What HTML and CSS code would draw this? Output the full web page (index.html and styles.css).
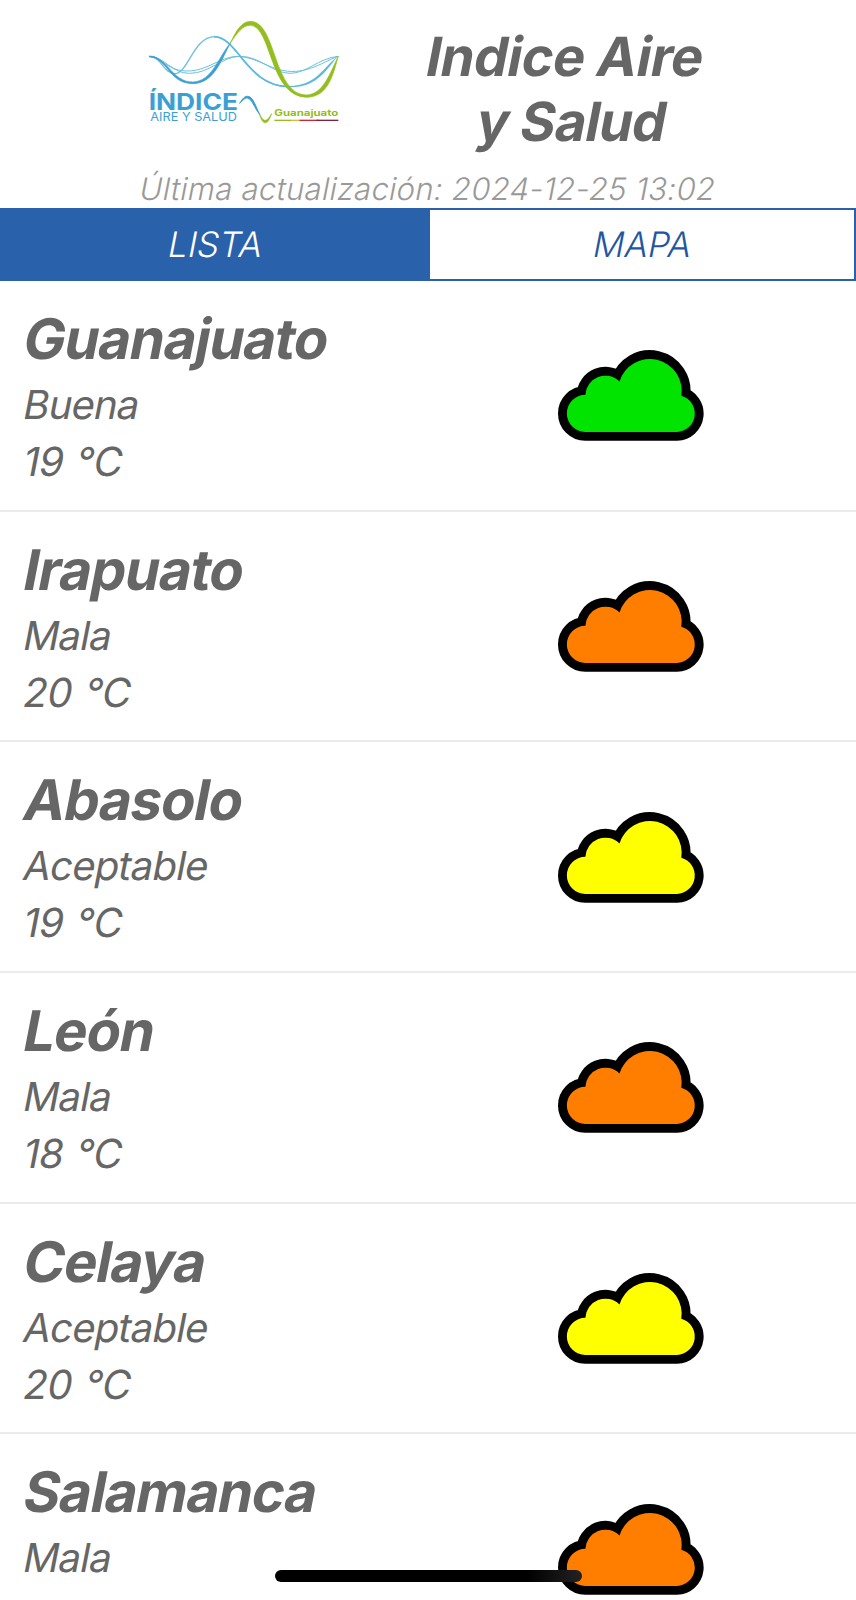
FILE: index.html
```html
<!DOCTYPE html>
<html lang="es">
<head>
    <meta charset="UTF-8">
    <meta name="viewport" content="width=device-width, initial-scale=1.0">
    <title>Indice Aire y Salud</title>
    <link rel="stylesheet" href="styles.css">
</head>
<body>

<!-- Cloud shape shared by all the rows -->
<svg class="defs" width="0" height="0">
    <symbol id="cloud" viewBox="54 57 437 275">
        <path d="M136 305A55.5 55.5 0 0 1 136 194A60 60 0 0 1 238 154A95.2 95.2 0 0 1 423 197A55 55 0 0 1 410 305Z" stroke="#000" stroke-width="53" paint-order="stroke"/>
    </symbol>
</svg>

<div class="app">
    <header class="header">
        <svg class="logo" viewBox="0 0 690 390" fill="none">
            <g stroke="#6cc0dd" stroke-width="3">
                <path d="M58 139C105 141 125 190 178 190C240 190 275 140 330 139C390 138 425 189 480 190C530 190 565 145 624 139"/>
                <path d="M58 139C95 142 110 180 165 183C220 186 255 153 300 142C350 129 400 165 445 178C520 200 570 160 624 139"/>
            </g>
            <path d="M70 140C95 150 105 192 135 191C175 189 190 80 254 80" stroke="#6cc0dd" stroke-width="4"/>
            <path d="M252 78C325 78 350 228 478 228C560 228 580 170 624 139C590 176 565 233 478 232C345 229 325 84 252 82Z" fill="#5db9de"/>
            <path d="M252 80C325 80 350 230 478 230" stroke="#5db9de" stroke-width="5"/>
            <path d="M58 138C110 138 125 216 188 216C248 214 265 140 302 98C275 145 255 220 188 221C115 220 115 145 58 141Z" fill="#3c9fd4" stroke="#3c9fd4" stroke-width="2"/>
            <path d="M301 99C320 60 335 34 363 34C440 38 430 254 529 255C580 253 600 190 625 138C609 195 595 261 529 262C418 258 425 50 362 46C338 44 320 72 301 99Z" fill="#94bd20" stroke="#94bd20" stroke-width="2"/>
            <text class="logo-name" x="56" y="300" textLength="268" lengthAdjust="spacingAndGlyphs">ÍNDICE</text>
            <text class="logo-sub" x="61" y="333" textLength="260" lengthAdjust="spacingAndGlyphs">AIRE Y SALUD</text>
            <path d="M329 280C339 264 345 258 353 259C370 260 376 288 389 313C373 294 366 266 352 264C344 263 338 272 329 280Z" fill="#3c9fd4" stroke="#3c9fd4" stroke-width="3"/>
            <path d="M387 309C394 323 399 331 406 331C413 330 418 322 425 311C419 328 413 338 405 338C396 337 392 323 387 309Z" fill="#94bd20" stroke="#94bd20" stroke-width="2"/>
            <text class="logo-state" x="433" y="319" textLength="192" lengthAdjust="spacingAndGlyphs">Guanajuato</text>
            <path d="M433 331H483" stroke="#94bd20" stroke-width="4"/>
            <path d="M483 331H508" stroke="#e0b93c" stroke-width="4"/>
            <path d="M508 331H565" stroke="#c9283b" stroke-width="4"/>
            <path d="M560 331H625" stroke="#7d2340" stroke-width="4"/>
        </svg>
        <h1><span class="slant">Indice Aire</span> <span class="slant second">y Salud</span></h1>
    </header>
    <p class="updated slant">Última actualización: 2024-12-25 13:02</p>

    <nav class="tabs">
        <a class="tab active"><span class="slant">LISTA</span></a>
        <a class="tab"><span class="slant">MAPA</span></a>
    </nav>

    <main class="list">
        <section class="city">
            <div class="info">
                <h2 class="slant">Guanajuato</h2>
                <p class="slant">Buena</p>
                <p class="slant temp">19 °C</p>
            </div>
            <svg class="cloud good"><use href="#cloud"/></svg>
        </section>
        <section class="city">
            <div class="info">
                <h2 class="slant">Irapuato</h2>
                <p class="slant">Mala</p>
                <p class="slant temp">20 °C</p>
            </div>
            <svg class="cloud bad"><use href="#cloud"/></svg>
        </section>
        <section class="city">
            <div class="info">
                <h2 class="slant">Abasolo</h2>
                <p class="slant">Aceptable</p>
                <p class="slant temp">19 °C</p>
            </div>
            <svg class="cloud fair"><use href="#cloud"/></svg>
        </section>
        <section class="city">
            <div class="info">
                <h2 class="slant">León</h2>
                <p class="slant">Mala</p>
                <p class="slant temp">18 °C</p>
            </div>
            <svg class="cloud bad"><use href="#cloud"/></svg>
        </section>
        <section class="city">
            <div class="info">
                <h2 class="slant">Celaya</h2>
                <p class="slant">Aceptable</p>
                <p class="slant temp">20 °C</p>
            </div>
            <svg class="cloud fair"><use href="#cloud"/></svg>
        </section>
        <section class="city">
            <div class="info">
                <h2 class="slant">Salamanca</h2>
                <p class="slant">Mala</p>
            </div>
            <svg class="cloud bad"><use href="#cloud"/></svg>
        </section>
    </main>
    <div class="home-indicator"></div>
</div>

</body>
</html>
```
FILE: styles.css
```css
* {
    box-sizing: border-box;
}
body {
    font-family: Inter, sans-serif;
    background-color: #fff;
    color: #666;
    margin: 0;
}
h1, h2, p {
    margin: 0;
}
.defs {
    display: block;
}
/* slanted roman letters, the real italic has other shapes */
.slant {
    display: block;
    transform: skewX(-11deg);
    transform-origin: 0 78%;
}
.app {
    position: relative;
    height: 1600px;
    overflow: hidden;
}
.header {
    display: flex;
    height: 168px;
    padding: 10px 0 0 130px;
}
.logo {
    width: 230px;
    height: 130px;
}
.logo-name {
    font-size: 69px;
    font-weight: 700;
    fill: #3c9fd4;
}
.logo-sub {
    font-size: 35px;
    fill: #3c9fd4;
}
.logo-state {
    font-size: 27px;
    font-weight: 700;
    fill: #94bd20;
}
h1 {
    width: 404px;
    padding-top: 14px;
    text-align: center;
    font-size: 54px;
    font-weight: 700;
    line-height: 65px;
    letter-spacing: -0.5px;
}
.second {
    padding-left: 13px;
    letter-spacing: -0.8px;
}
.updated {
    height: 40px;
    padding-right: 4px;
    text-align: center;
    font-size: 31px;
    font-weight: 300;
    line-height: 42px;
    letter-spacing: 0.3px;
    color: #999;
}
.tabs {
    display: flex;
    height: 73px;
    border: 2px solid #2961ab;
    border-left: none;
}
.tab {
    flex: 1;
    padding-right: 6px;
    text-align: center;
    font-size: 35px;
    font-weight: 300;
    line-height: 69px;
    color: #2356a0;
}
.tab.active {
    flex: 0 0 430px;
    background-color: #2961ab;
    color: #fff;
}
.city {
    display: flex;
    align-items: center;
    height: 230.7px;
    border-bottom: 2px solid #ebebeb;
}
.info {
    width: 558px;
    height: 100%;
    padding: 25px 0 0 21px;
}
h2 {
    margin-bottom: 4px;
    font-size: 56px;
    font-weight: 700;
    line-height: 66px;
    letter-spacing: -1px;
}
.info p {
    font-size: 40px;
    line-height: 57px;
    letter-spacing: -0.8px;
}
.info .temp {
    letter-spacing: -0.5px;
    word-spacing: 2px;
}
.cloud {
    width: 146px;
    height: 92px;
}
.good {
    fill: #00e400;
}
.fair {
    fill: #ffff00;
}
.bad {
    fill: #ff7e00;
}
.home-indicator {
    position: absolute;
    left: 275px;
    top: 1570px;
    width: 307px;
    height: 12px;
    border-radius: 6px;
    background: linear-gradient(to right, #000 82%, #222);
}
```
